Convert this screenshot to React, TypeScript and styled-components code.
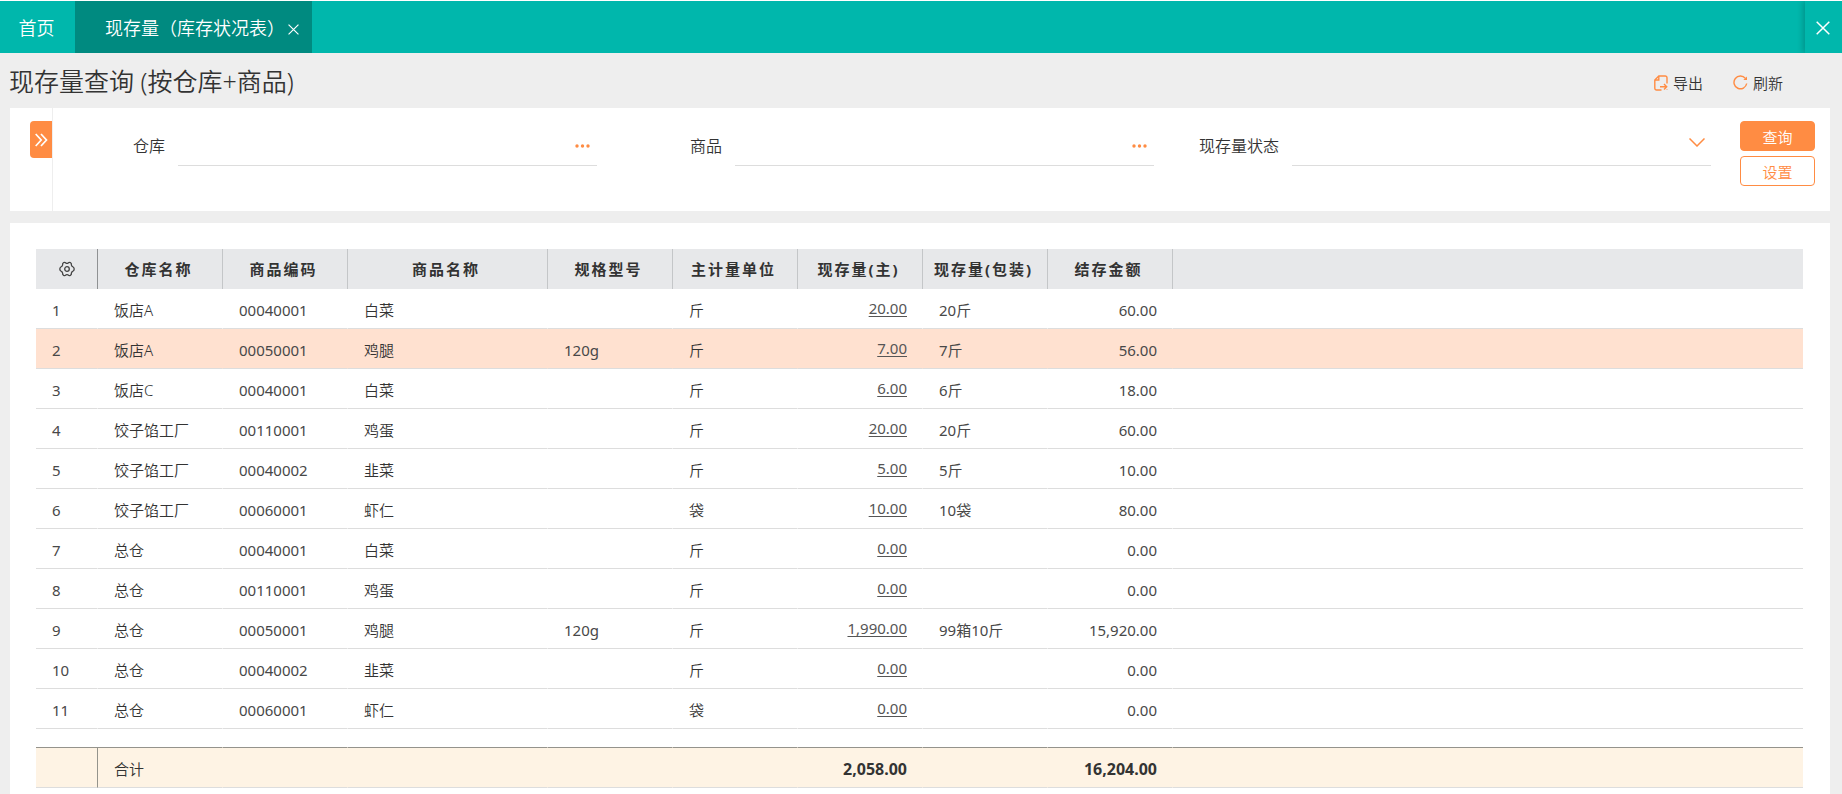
import React from "react";
import styled, { createGlobalStyle, css } from "styled-components";

const Global = createGlobalStyle`
  *, *::before, *::after { box-sizing: border-box; }
  body {
    margin: 0;
    background: #eee;
    color: #333;
    font-family: "Noto Sans", "Noto Sans CJK SC", sans-serif;
    font-size: 15px;
    font-weight: 350;
    line-height: 20px;
  }
  button, input, select { font: inherit; color: inherit; }
  button { padding: 0; border: 0; background: none; cursor: pointer; }
`;

const Page = styled.div`
  display: flex;
  flex-direction: column;
  min-height: 100vh;
`;

const TabBar = styled.nav`
  display: flex;
  height: 53px;
  border-top: 1px solid #fff;
  background: #00b7ac;
  color: #fff;
  font-size: 18px;
`;

const HomeTab = styled.button`
  width: 75px;
  padding: 2px 2px 0 0;
`;

const Tab = styled.div`
  display: flex;
  align-items: center;
  padding: 2px 13px 0 30px;
  background: #008a80;
`;

const TabTitle = styled.button`
  margin-right: 3px;
`;

const IconButton = styled.button`
  display: flex;
  align-items: center;
  justify-content: center;
`;

const TabClose = styled(IconButton)`
  padding-top: 3px;
`;

const CloseAll = styled(IconButton)`
  width: 37px;
  margin-left: auto;
  padding: 2px 1px 0 0;
  box-shadow: -2px 0 6px rgba(0, 0, 0, 0.2);
  clip-path: inset(0 0 0 -10px);
`;

const TitleBar = styled.header`
  display: flex;
  align-items: center;
  justify-content: space-between;
  height: 55px;
  padding: 0 59px 0 9px;
`;

const Title = styled.h1`
  margin: 0;
  font-size: 25px;
  font-weight: 350;
  line-height: 32px;
`;

const Actions = styled.div`
  display: flex;
  gap: 30px;
  padding-top: 4px;
`;

const Action = styled.button`
  display: flex;
  align-items: center;
  gap: 5px;
`;

const Panel = styled.section`
  margin: 0 12px 12px 10px;
  background: #fff;
`;

const FilterPanel = styled(Panel)`
  display: flex;
  height: 103px;
`;

const Rail = styled.div`
  display: flex;
  justify-content: flex-end;
  align-items: flex-start;
  width: 43px;
  padding-top: 13px;
  border-right: 1px solid #eee;
`;

const Expand = styled(IconButton)`
  width: 22px;
  height: 37px;
  border-radius: 4px 0 0 4px;
  background: #ff8c43;
`;

const Fields = styled.form`
  flex: 1;
  display: grid;
  grid-template-columns: repeat(3, 1fr);
`;

const Field = styled.div`
  display: grid;
  grid-template-columns: 112px 1fr;
  column-gap: 13px;
  align-content: start;
  padding: 18px 13px 0 0;
  line-height: 40px;
`;

const Label = styled.label`
  font-size: 16px;
  text-align: right;
`;

const Line = styled.div`
  display: flex;
  align-items: center;
  height: 40px;
  border-bottom: 1px solid #ddd;
`;

const TextInput = styled.input`
  flex: 1;
  min-width: 0;
  height: 36px;
  border: 0;
  outline: 0;
  background: none;
`;

const MoreButton = styled(IconButton)`
  width: 30px;
  height: 36px;
`;

const SelectLine = styled(Line)`
  display: grid;
  grid-template-areas: "box";
  > * { grid-area: box; }
  > svg { justify-self: end; margin: 0 6px 6px 0; pointer-events: none; }
`;

const Select = styled.select`
  width: 100%;
  height: 36px;
  border: 0;
  outline: 0;
  background: none;
  appearance: none;
`;

const FilterButtons = styled.div`
  display: flex;
  flex-direction: column;
  gap: 5px;
  width: 106px;
  padding: 13px 15px 0 16px;
`;

const Button = styled.button<{ $primary?: boolean }>`
  height: 30px;
  padding-top: 2px;
  border: 1px solid #ff8c43;
  border-radius: 4px;
  background: ${(p) => (p.$primary ? "#ff8c43" : "#fff")};
  color: ${(p) => (p.$primary ? "#fff" : "#ff8c43")};
`;

const TablePanel = styled(Panel)`
  flex: 1;
  margin-bottom: 0;
  padding: 26px 27px 6px 26px;
`;

const Table = styled.table`
  width: 100%;
  table-layout: fixed;
  border-collapse: separate;
  border-spacing: 0;
`;

const Head = styled.th<{ $dark?: boolean }>`
  height: 40px;
  padding: 0 ${(p) => (p.$dark ? 0 : 3)}px 0 0;
  border-right: 1px solid ${(p) => (p.$dark ? "#8f9193" : "#c4c6c8")};
  background: #e7e8ea;
  font-weight: 700;
  letter-spacing: 2px;
  &:last-child { border-right: 0; }
`;

const Row = styled.tr<{ $active?: boolean }>`
  ${(p) => p.$active && css`background: #ffe1d0;`}
`;

const Cell = styled.td<{ $right?: boolean; $numeric?: boolean }>`
  height: 40px;
  padding: 2px 15px 0 16px;
  border-right: 1px solid transparent;
  border-bottom: 1px solid #ddd;
  text-align: ${(p) => (p.$right ? "right" : "left")};
  white-space: nowrap;
  ${(p) => p.$numeric && css`color: #484848; font-weight: 400;`}
  &:last-child { border-right: 0; }
`;

const LinkCell = styled(Cell)`
  padding: 0 15px 2px 16px;
  a {
    color: #555;
    text-underline-offset: 2px;
  }
`;

const Spacer = styled.td`
  height: 18px;
  padding: 0;
`;

const TotalCell = styled(Cell)<{ $dark?: boolean }>`
  height: 41px;
  border-top: 1px solid #94938c;
  background: #fef3e4;
  ${(p) => p.$right && css`font-size: 16px; font-weight: 700;`}
  ${(p) => p.$dark && css`border-right-color: #94938c;`}
`;

const Cross = ({ size, label }: { size: number; label: string }) => (
  <svg width={size} height={size} viewBox="0 0 14 14" fill="none" stroke="#fff" strokeWidth="1.5" role="img" aria-label={label}>
    <path d="M.7.7l12.6 12.6M13.3.7L.7 13.3" />
  </svg>
);

const ExportIcon = () => (
  <svg width="14" height="16" viewBox="0 0 14 16" fill="none" stroke="#ff8c43" strokeWidth="1.4">
    <path d="M7.5 15H2.500A1.700 1.700 0 0 1 .8 13.300V5L4.800 1h6.500A1.700 1.700 0 0 1 13 2.700V8.500M13 14v.5" />
    <path d="M1 5H4.800V1M6 11.700h6.500M10 9l2.700 2.700L10 14.400" />
  </svg>
);

const RefreshIcon = () => (
  <svg width="15" height="15" viewBox="0 0 15 15" fill="none" stroke="#ff8c43" strokeWidth="1.4">
    <path d="M13.700 8.500A6.400 6.400 0 1 1 12.400 3.400" />
    <path d="M14 1.500V5H10.300Z" fill="#ff8c43" stroke="none" />
  </svg>
);

const DoubleChevron = () => (
  <svg width="13" height="14" viewBox="0 0 13 14" fill="none" stroke="#fff" strokeWidth="1.700">
    <path d="M.7 1l5.500 6-5.500 6M6 1l5.500 6L6 13" />
  </svg>
);

const Dots = () => (
  <svg width="15" height="4" viewBox="0 0 15 4" fill="#ff8c43">
    <circle cx="2" cy="2" r="1.700" />
    <circle cx="7.500" cy="2" r="1.700" />
    <circle cx="13" cy="2" r="1.700" />
  </svg>
);

const Chevron = () => (
  <svg width="16" height="9" viewBox="0 0 16 9" fill="none" stroke="#ff8c43" strokeWidth="1.500">
    <path d="M.5.5L8 8 15.500.5" />
  </svg>
);

const Gear = () => (
  <svg width="16" height="16" viewBox="0 0 16 16" fill="none" stroke="#444" strokeWidth="1.300" strokeLinejoin="round">
    <path d="M4.700 1.500Q6 1 7 2.200Q8 2.700 9 2.200Q10 1 11.300 1.500Q12.700 2.400 12.400 4Q12.600 5.300 13.800 5.700Q15.200 6.500 15.200 8Q15.200 9.500 13.800 10.300Q12.600 10.700 12.400 12Q12.700 13.600 11.300 14.500Q10 15 9 13.800Q8 13.300 7 13.800Q6 15 4.700 14.500Q3.300 13.600 3.600 12Q3.400 10.700 2.200 10.300Q.8 9.500 .8 8Q.8 6.500 2.200 5.700Q3.400 5.300 3.600 4Q3.300 2.400 4.700 1.500Z" />
    <circle cx="8" cy="8" r="2.300" />
  </svg>
);

const columns = [
  { name: "仓库名称", width: 125 },
  { name: "商品编码", width: 125 },
  { name: "商品名称", width: 200 },
  { name: "规格型号", width: 125 },
  { name: "主计量单位", width: 125 },
  { name: "现存量(主)", width: 125 },
  { name: "现存量(包装)", width: 125 },
  { name: "结存金额", width: 125 },
];

const Col = styled.col<{ $w?: number }>`
  ${(p) => p.$w && css`width: ${p.$w}px;`}
`;

const rows = [
  ["饭店A", "00040001", "白菜", "", "斤", "20.00", "20斤", "60.00"],
  ["饭店A", "00050001", "鸡腿", "120g", "斤", "7.00", "7斤", "56.00"],
  ["饭店C", "00040001", "白菜", "", "斤", "6.00", "6斤", "18.00"],
  ["饺子馅工厂", "00110001", "鸡蛋", "", "斤", "20.00", "20斤", "60.00"],
  ["饺子馅工厂", "00040002", "韭菜", "", "斤", "5.00", "5斤", "10.00"],
  ["饺子馅工厂", "00060001", "虾仁", "", "袋", "10.00", "10袋", "80.00"],
  ["总仓", "00040001", "白菜", "", "斤", "0.00", "", "0.00"],
  ["总仓", "00110001", "鸡蛋", "", "斤", "0.00", "", "0.00"],
  ["总仓", "00050001", "鸡腿", "120g", "斤", "1,990.00", "99箱10斤", "15,920.00"],
  ["总仓", "00040002", "韭菜", "", "斤", "0.00", "", "0.00"],
  ["总仓", "00060001", "虾仁", "", "袋", "0.00", "", "0.00"],
];

const totals = ["合计", "", "", "", "", "2,058.00", "", "16,204.00"];

export default function App() {
  const [active, setActive] = React.useState(1);
  return (
    <Page lang="zh-CN">
      <Global />
      <TabBar>
        <HomeTab>首页</HomeTab>
        <Tab>
          <TabTitle>现存量（库存状况表）</TabTitle>
          <TabClose><Cross size={11} label="关闭" /></TabClose>
        </Tab>
        <CloseAll><Cross size={14} label="全部关闭" /></CloseAll>
      </TabBar>
      <TitleBar>
        <Title>现存量查询 (按仓库+商品)</Title>
        <Actions>
          <Action><ExportIcon />导出</Action>
          <Action><RefreshIcon />刷新</Action>
        </Actions>
      </TitleBar>
      <FilterPanel>
        <Rail>
          <Expand aria-label="展开"><DoubleChevron /></Expand>
        </Rail>
        <Fields>
          <Field>
            <Label htmlFor="warehouse">仓库</Label>
            <Line>
              <TextInput id="warehouse" />
              <MoreButton type="button" aria-label="选择仓库"><Dots /></MoreButton>
            </Line>
          </Field>
          <Field>
            <Label htmlFor="product">商品</Label>
            <Line>
              <TextInput id="product" />
              <MoreButton type="button" aria-label="选择商品"><Dots /></MoreButton>
            </Line>
          </Field>
          <Field>
            <Label htmlFor="status">现存量状态</Label>
            <SelectLine>
              <Select id="status"><option value="" /></Select>
              <Chevron />
            </SelectLine>
          </Field>
        </Fields>
        <FilterButtons>
          <Button $primary type="button">查询</Button>
          <Button type="button">设置</Button>
        </FilterButtons>
      </FilterPanel>
      <TablePanel>
        <Table>
          <colgroup>
            <Col $w={62} />
            {columns.map((c) => <Col key={c.name} $w={c.width} />)}
            <Col />
          </colgroup>
          <thead>
            <tr>
              <Head $dark><IconButton as="span"><Gear /></IconButton></Head>
              {columns.map((c) => <Head key={c.name} scope="col">{c.name}</Head>)}
              <Head />
            </tr>
          </thead>
          <tbody>
            {rows.map((row, i) => (
              <Row key={i} $active={i === active} onClick={() => setActive(i)}>
                <Cell $numeric>{i + 1}</Cell>
                {row.map((value, c) =>
                  c === 5 ? (
                    <LinkCell key={c} $right $numeric><a href="#detail">{value}</a></LinkCell>
                  ) : (
                    <Cell key={c} $right={c === 7} $numeric={/\d/.test(value)}>{value}</Cell>
                  )
                )}
                <Cell />
              </Row>
            ))}
          </tbody>
          <tfoot>
            <tr><Spacer colSpan={10} /></tr>
            <tr>
              <TotalCell $dark />
              {totals.map((value, c) => <TotalCell key={c} $right={c === 5 || c === 7}>{value}</TotalCell>)}
              <TotalCell />
            </tr>
          </tfoot>
        </Table>
      </TablePanel>
    </Page>
  );
}
